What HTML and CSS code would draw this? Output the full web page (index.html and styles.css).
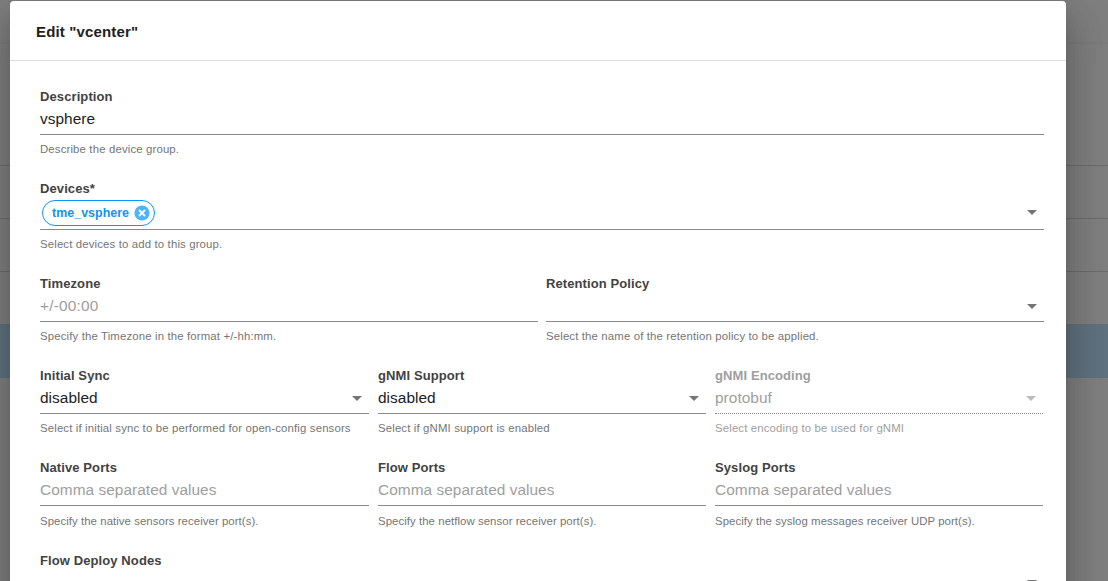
FILE: index.html
```html
<!DOCTYPE html>
<html lang="en">
<head>
<meta charset="utf-8">
<title>Edit "vcenter"</title>
<link rel="stylesheet" href="styles.css">
</head>
<body>
<div class="backdrop">
  <div class="bg-row bg-bar"></div>
  <div class="bg-row bg-head"></div>
  <div class="bg-row"></div>
  <div class="bg-row"></div>
  <div class="bg-row"></div>
  <div class="bg-row bg-selected"></div>
</div>
<main class="modal">
  <header class="modal-header"><h1 class="title">Edit "vcenter"</h1></header>
  <form class="form">
    <div class="row">
      <div class="field">
        <div class="label">Description</div>
        <div class="control"><span class="value">vsphere</span></div>
        <div class="hint">Describe the device group.</div>
      </div>
    </div>
    <div class="row">
      <div class="field">
        <div class="label">Devices*</div>
        <div class="control control-chips">
          <span class="chip"><span class="chip-text">tme_vsphere</span><svg class="chip-x" viewBox="0 0 16 16"><circle cx="8" cy="8" r="7.6" fill="#4db4fc"/><path d="M5 5l6 6M11 5l-6 6" stroke="#fff" stroke-width="1.8"/></svg></span>
          <svg class="arrow" viewBox="0 0 10 5"><path d="M0 0h10L5 5z"/></svg>
        </div>
        <div class="hint">Select devices to add to this group.</div>
      </div>
    </div>
    <div class="row">
      <div class="field">
        <div class="label">Timezone</div>
        <div class="control"><span class="value placeholder zone">+/-00:00</span></div>
        <div class="hint">Specify the Timezone in the format +/-hh:mm.</div>
      </div>
      <div class="field">
        <div class="label">Retention Policy</div>
        <div class="control"><span class="value"></span><svg class="arrow" viewBox="0 0 10 5"><path d="M0 0h10L5 5z"/></svg></div>
        <div class="hint">Select the name of the retention policy to be applied.</div>
      </div>
    </div>
    <div class="row thirds">
      <div class="field">
        <div class="label">Initial Sync</div>
        <div class="control"><span class="value">disabled</span><svg class="arrow" viewBox="0 0 10 5"><path d="M0 0h10L5 5z"/></svg></div>
        <div class="hint">Select if initial sync to be performed for open-config sensors</div>
      </div>
      <div class="field">
        <div class="label">gNMI Support</div>
        <div class="control"><span class="value">disabled</span><svg class="arrow" viewBox="0 0 10 5"><path d="M0 0h10L5 5z"/></svg></div>
        <div class="hint">Select if gNMI support is enabled</div>
      </div>
      <div class="field disabled">
        <div class="label">gNMI Encoding</div>
        <div class="control"><span class="value">protobuf</span><svg class="arrow" viewBox="0 0 10 5"><path d="M0 0h10L5 5z"/></svg></div>
        <div class="hint">Select encoding to be used for gNMI</div>
      </div>
    </div>
    <div class="row thirds ports">
      <div class="field">
        <div class="label">Native Ports</div>
        <div class="control"><span class="value placeholder">Comma separated values</span></div>
        <div class="hint">Specify the native sensors receiver port(s).</div>
      </div>
      <div class="field">
        <div class="label">Flow Ports</div>
        <div class="control"><span class="value placeholder">Comma separated values</span></div>
        <div class="hint">Specify the netflow sensor receiver port(s).</div>
      </div>
      <div class="field">
        <div class="label">Syslog Ports</div>
        <div class="control"><span class="value placeholder">Comma separated values</span></div>
        <div class="hint">Specify the syslog messages receiver UDP port(s).</div>
      </div>
    </div>
    <div class="row">
      <div class="field">
        <div class="label">Flow Deploy Nodes</div>
        <div class="control control-last"><span class="value"></span><svg class="arrow" viewBox="0 0 10 5"><path d="M0 0h10L5 5z"/></svg></div>
      </div>
    </div>
  </form>
</main>
</body>
</html>
```
FILE: styles.css
```css
* { box-sizing: border-box; }
body {
  margin: 0;
  height: 581px;
  overflow: hidden;
  background: #7f7f7f;
  font-family: "Liberation Sans", Arial, sans-serif;
}
.backdrop { position: absolute; inset: 0; }
.bg-row { height: 53px; border-bottom: 1px solid #6c6c6c; }
.bg-bar { height: 44px; border-bottom: 2px solid #7b7b7b; }
.bg-head { height: 122px; }
.bg-row:nth-child(5) { height: 52px; border-bottom: 0; }
.bg-selected { height: 54px; background: #60727f; border: 0; }
.modal {
  position: relative;
  width: 1056px;
  height: 640px;
  margin: 1px 0 0 10px;
  background: #fff;
  border-radius: 4px;
  box-shadow: 0 11px 15px -7px rgba(0,0,0,.2), 0 24px 38px 3px rgba(0,0,0,.14), 0 9px 46px 8px rgba(0,0,0,.12);
}
.modal-header {
  height: 60px;
  padding: 0 26px;
  display: flex;
  align-items: center;
  border-bottom: 1px solid #dedede;
}
.title { margin: 2px 0 0; font-size: 15px; line-height: 20px; letter-spacing: .15px; color: #212121; }
.form { padding: 27px 22px 0 30px; }
.row { display: grid; grid-auto-flow: column; grid-auto-columns: 1fr; column-gap: 8px; }
.thirds { grid-template-columns: 329px 328px 328px; column-gap: 9px; }
.field { color: #212121; min-width: 0; }
.label { height: 18px; font-size: 13px; line-height: 18px; font-weight: bold; letter-spacing: .1px; color: #424242; white-space: nowrap; }
.control {
  height: 29px;
  padding: 2px 7px 0 0;
  display: flex;
  justify-content: space-between;
  border-bottom: 1px solid #8c8c8c;
}
.control-chips { height: 32px; }
.control-last { padding-top: 1px; }
.value { font-size: 15.4px; line-height: 22px; letter-spacing: .05px; white-space: nowrap; }
.zone { letter-spacing: .2px; }
.placeholder { color: #9e9e9e; }
.arrow { width: 10px; height: 5px; margin-top: 9px; fill: #757575; }
.control-chips .arrow { margin-top: 10px; }
.hint { height: 45px; padding-top: 6px; font-size: 11.4px; line-height: 16px; letter-spacing: .14px; color: #757575; white-space: nowrap; }
.ports .hint { height: 46px; padding-top: 7px; letter-spacing: .06px; }
.chip {
  height: 26px;
  margin-left: 2px;
  padding: 0 4px 0 9px;
  display: flex;
  align-items: center;
  align-self: flex-start;
  gap: 5px;
  border: 1px solid #0d96f2;
  border-radius: 13px;
}
.chip-text { font-size: 12.4px; font-weight: bold; letter-spacing: .05px; color: #0d96f2; }
.chip-x { width: 16px; height: 16px; }
.disabled .label, .disabled .value, .disabled .hint { color: #9e9e9e; }
.disabled .control { border-bottom-style: dotted; }
.disabled .arrow { fill: #bdbdbd; }
```
